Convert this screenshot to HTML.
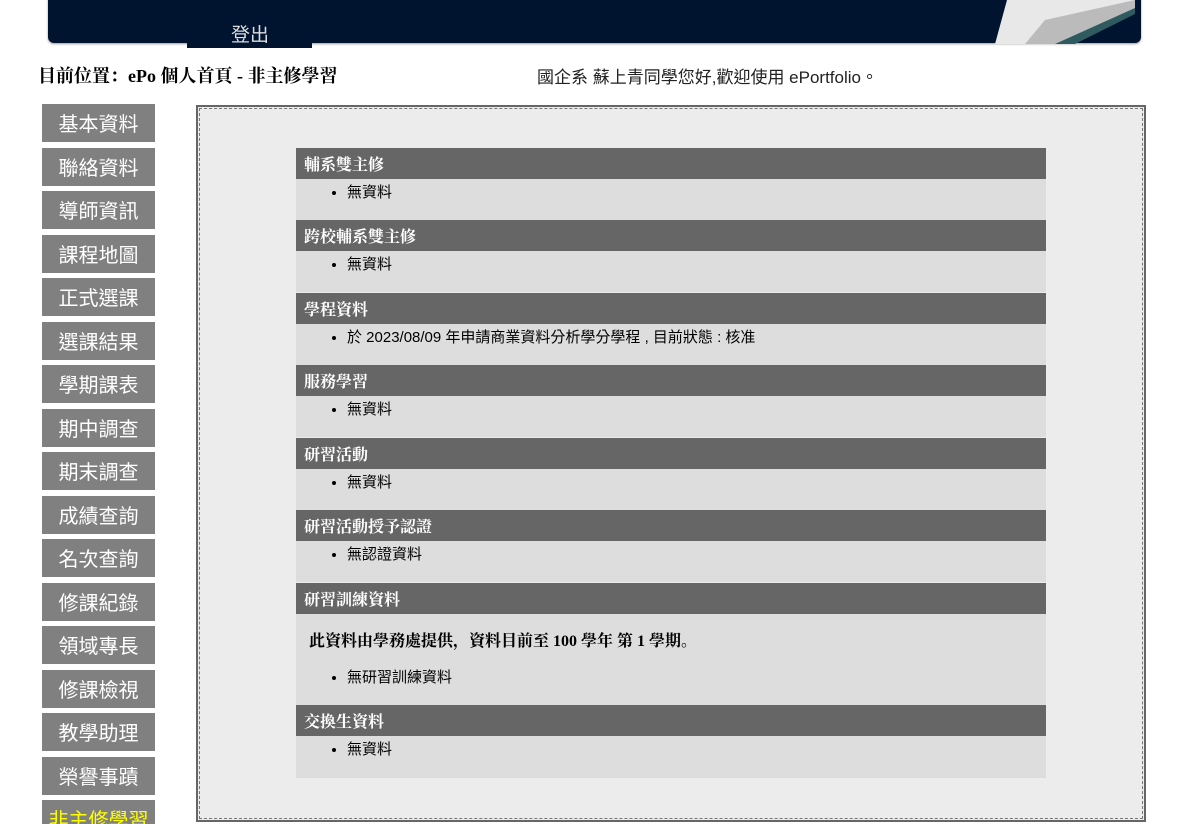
<!DOCTYPE html>
<html style="width:1191px;height:824px;overflow:hidden"><head><meta charset="utf-8"><style>
body{margin:0;width:1191px;height:824px;overflow:hidden;background:#fff;font-family:"Liberation Serif","Noto Serif CJK SC","Noto Sans CJK TC",serif;position:relative}
.hdr{position:absolute;left:48px;top:-10px;width:1093px;height:53px;background:#00132f;border-radius:0 0 6px 6px;box-shadow:0 1px 2px #999}
.tab{position:absolute;left:187px;top:0;width:125px;height:48px;background:#00132f}
.tab span{position:absolute;left:44px;top:20px;color:#ddd;font:19px "Noto Sans CJK TC",sans-serif}
.book{position:absolute;left:995px;top:0;width:135px;height:43px;background:linear-gradient(160deg,#fff 0%,#ccc 40%,#eee 60%,#2e5a60 80%,#00132f 82%);clip-path:polygon(0 100%,10% 0,100% 0,100% 10%,45% 100%)}
.bc{position:absolute;left:38px;top:62px;font-weight:bold;font-size:18px}
.wel{position:absolute;left:537px;top:63px;font-size:17px;font-family:"Liberation Sans","Noto Sans CJK TC",sans-serif;color:#222}
.nav a{position:absolute;left:42px;width:113px;height:38px;background:#808080;color:#fff;font:20px "Noto Sans CJK TC",sans-serif;text-align:center;line-height:38px;text-decoration:none;overflow:hidden}
.box{position:absolute;left:196px;top:105px;width:946px;height:713px;border:2px solid #666;background:#ececec}
.box:before{content:"";position:absolute;left:1px;top:1px;right:1px;bottom:1px;border:1px dashed #777}
.sec{position:absolute;left:296px;width:750px}
.h{height:31px;background:#666;color:#fff;font-weight:bold;font-size:16px;line-height:31px;padding-left:8px;font-family:"Noto Serif CJK SC","Noto Sans CJK TC",serif}
.b{background:#ddd;height:41px;font:15px "Liberation Sans","Noto Sans CJK TC",sans-serif;position:relative}
.b ul{margin:0;padding:0 0 0 51px;position:absolute;top:2px}
</style></head><body>
<div class="hdr"></div><div class="tab"><span>登出</span></div>
<svg style="position:absolute;left:985px;top:0" width="150" height="44"><polygon points="10,44 22,0 150,0 150,6 70,44" fill="#e8e8e8"/><polygon points="40,44 60,20 150,0 150,10 80,44" fill="#bbb"/><polygon points="70,44 150,8 150,14 90,44" fill="#2e5a60"/></svg>
<div class="bc">目前位置：ePo 個人首頁 - 非主修學習</div>
<div class="wel">國企系 蘇上青同學您好,歡迎使用 ePortfolio。</div>
<div class="nav">
<a style="top:104px">基本資料</a><a style="top:148px">聯絡資料</a><a style="top:191px">導師資訊</a><a style="top:235px">課程地圖</a><a style="top:278px">正式選課</a><a style="top:322px">選課結果</a><a style="top:365px">學期課表</a><a style="top:409px">期中調查</a><a style="top:452px">期末調查</a><a style="top:496px">成績查詢</a><a style="top:539px">名次查詢</a><a style="top:583px">修課紀錄</a><a style="top:626px">領域專長</a><a style="top:670px">修課檢視</a><a style="top:713px">教學助理</a><a style="top:757px">榮譽事蹟</a><a style="top:800px;height:24px;color:#ff0">非主修學習</a>
</div>
<div class="box"></div>
<div class="sec" style="top:148px"><div class="h">輔系雙主修</div><div class="b"><ul><li>無資料</li></ul></div></div>
<div class="sec" style="top:220px"><div class="h">跨校輔系雙主修</div><div class="b"><ul><li>無資料</li></ul></div></div>
<div class="sec" style="top:293px"><div class="h">學程資料</div><div class="b"><ul><li>於 2023/08/09 年申請商業資料分析學分學程 , 目前狀態 : 核准</li></ul></div></div>
<div class="sec" style="top:365px"><div class="h">服務學習</div><div class="b"><ul><li>無資料</li></ul></div></div>
<div class="sec" style="top:438px"><div class="h">研習活動</div><div class="b"><ul><li>無資料</li></ul></div></div>
<div class="sec" style="top:510px"><div class="h">研習活動授予認證</div><div class="b"><ul><li>無認證資料</li></ul></div></div>
<div class="sec" style="top:583px"><div class="h">研習訓練資料</div><div class="b" style="height:91px"><div style="position:absolute;left:13px;top:14px;font:bold 16px 'Liberation Serif','Noto Serif CJK SC',serif">此資料由學務處提供，資料目前至 100 學年 第 1 學期。</div><ul style="top:52px"><li>無研習訓練資料</li></ul></div></div>
<div class="sec" style="top:705px"><div class="h">交換生資料</div><div class="b" style="height:42px"><ul><li>無資料</li></ul></div></div>
</body></html>
